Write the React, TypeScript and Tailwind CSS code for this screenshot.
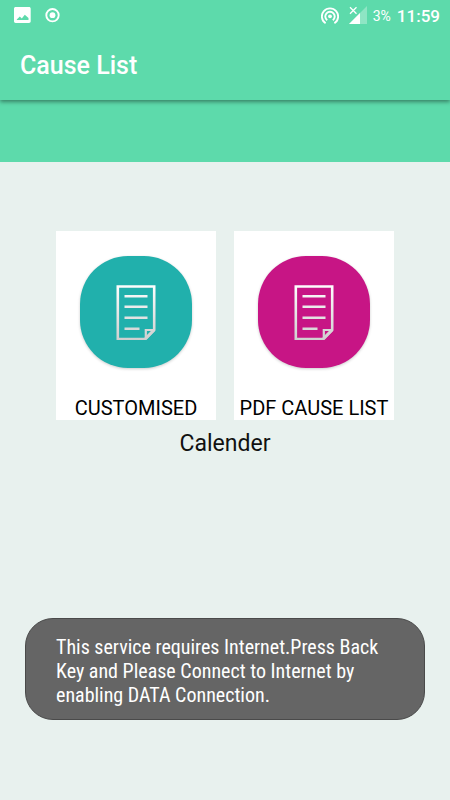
interface Tile {
  id: string;
  label: string;
  color: string;
}

const tiles: Tile[] = [
  { id: 'customised', label: 'CUSTOMISED', color: 'bg-[#21b0ac]' },
  { id: 'pdf', label: 'PDF CAUSE LIST', color: 'bg-[#c71585]' },
];

function DocumentIcon({ id }: { id: string }) {
  const gradientId = `paper-${id}`;

  return (
    <svg className="w-10 h-14" viewBox="0 0 40 56" fill="none" aria-hidden="true">
      <defs>
        <linearGradient id={gradientId} gradientUnits="userSpaceOnUse" x1="0" y1="0" x2="0" y2="56">
          <stop offset="0" stopColor="#ffffff" />
          <stop offset="1" stopColor="#cfcfcf" />
        </linearGradient>
      </defs>
      <g stroke={`url(#${gradientId})`}>
        <path d="M1.800 2.500h36.400v43.500L29.500 55H1.800z" strokeWidth="2.600" />
        <path d="M29.800 54v-8h8" strokeWidth="2.200" />
        <path d="M29.500 54.500l8.500-8.500" strokeWidth="2.800" />
      </g>
      <g fill={`url(#${gradientId})`}>
        <rect x="8.500" y="11" width="23" height="2.500" />
        <rect x="8.500" y="21.500" width="23" height="2.500" />
        <rect x="8.500" y="32.500" width="23" height="2.500" />
        <rect x="8.500" y="43.500" width="15" height="2.500" />
      </g>
    </svg>
  );
}

function StatusBar() {
  return (
    <div className="flex h-8 items-center justify-between pl-3 pr-2.5 text-white">
      <div className="flex items-center gap-3">
        {/* Screenshot saved */}
        <svg className="w-5 h-5" viewBox="0 0 20 20" aria-hidden="true">
          <path
            fill="currentColor"
            fillRule="evenodd"
            d="M3.700 1h13.300c1 0 1.700.7 1.700 1.700v12.600c0 1-.7 1.700-1.700 1.700H3.700c-1 0-1.700-.7-1.700-1.700V2.700c0-1 .7-1.700 1.700-1.700zM4.800 14h11.700V12l-3.700-3.300-3 3.800-2-2-3 3z"
          />
        </svg>
        {/* Recorder */}
        <svg className="w-4 h-4" viewBox="0 0 16 16" fill="none" aria-hidden="true">
          <circle cx="8.500" cy="7.200" r="6.200" stroke="currentColor" strokeWidth="1.900" />
          <circle cx="8.500" cy="7.200" r="2.900" fill="currentColor" />
        </svg>
      </div>

      <div className="flex items-center">
        {/* Hotspot */}
        <svg className="mr-2.5 w-[18px] h-[18px]" viewBox="0 0 18 18" fill="none" aria-hidden="true">
          <circle cx="9" cy="9.300" r="1.900" fill="currentColor" />
          <path
            d="M6.200 13.200a4.700 4.700 0 1 1 5.600 0M4.600 16.300a8.100 8.100 0 1 1 8.800 0"
            stroke="currentColor"
            strokeWidth="1.900"
          />
        </svg>
        {/* Mobile signal, no data */}
        <svg className="mr-1.5 w-[18px] h-5" viewBox="0 0 18 20" fill="none" aria-hidden="true">
          <path d="M18 0v18H0z" fill="currentColor" fillOpacity="0.300" />
          <path d="M11 7v11H0z" fill="currentColor" />
          <path d="M1 1.200l6.500 6.500M7.500 1.200L1 7.700" stroke="currentColor" strokeWidth="1.300" />
        </svg>
        <span className="mr-1.5 text-sm leading-5">3%</span>
        <span className="text-[17px] leading-5 font-medium">11:59</span>
      </div>
    </div>
  );
}

function CauseTile({ tile }: { tile: Tile }) {
  return (
    <button type="button" className="flex w-40 flex-col items-center bg-white pt-[25px] text-black">
      <span
        className={`flex h-28 w-28 items-center justify-center rounded-[48px] shadow-[0_1px_3px_rgba(0,0,0,0.2)] ${tile.color}`}
      >
        <DocumentIcon id={tile.id} />
      </span>
      <span className="mt-7 whitespace-nowrap text-xl leading-6">{tile.label}</span>
    </button>
  );
}

export default function App() {
  return (
    <div className="relative min-h-screen bg-[#e8f1ee] font-['Roboto',sans-serif]">
      <header className="relative bg-[#5ddaab] shadow-[0_2px_4px_rgba(0,0,0,0.4)]">
        <StatusBar />
        <h1 className="p-5 text-[25px] leading-7 font-medium text-white">Cause List</h1>
      </header>
      <div className="h-[62px] bg-[#5ddaab]" />

      <main className="pt-[69px]">
        <div className="flex justify-center gap-[18px]">
          {tiles.map((tile) => (
            <CauseTile key={tile.id} tile={tile} />
          ))}
        </div>
        <p className="mt-2 text-center text-[23px] leading-8 text-[#111111]">Calender</p>
      </main>

      {/* Toast */}
      <div
        role="status"
        className="absolute inset-x-[25px] bottom-20 rounded-[28px] border border-[#4a4a4a] bg-[#656565] px-[30px] pt-4 pb-3 font-['Roboto_Condensed','Roboto',sans-serif] text-xl leading-6 text-white"
      >
        This service requires Internet.Press Back
        <br />
        Key and Please Connect to Internet by
        <br />
        enabling DATA Connection.
      </div>
    </div>
  );
}
